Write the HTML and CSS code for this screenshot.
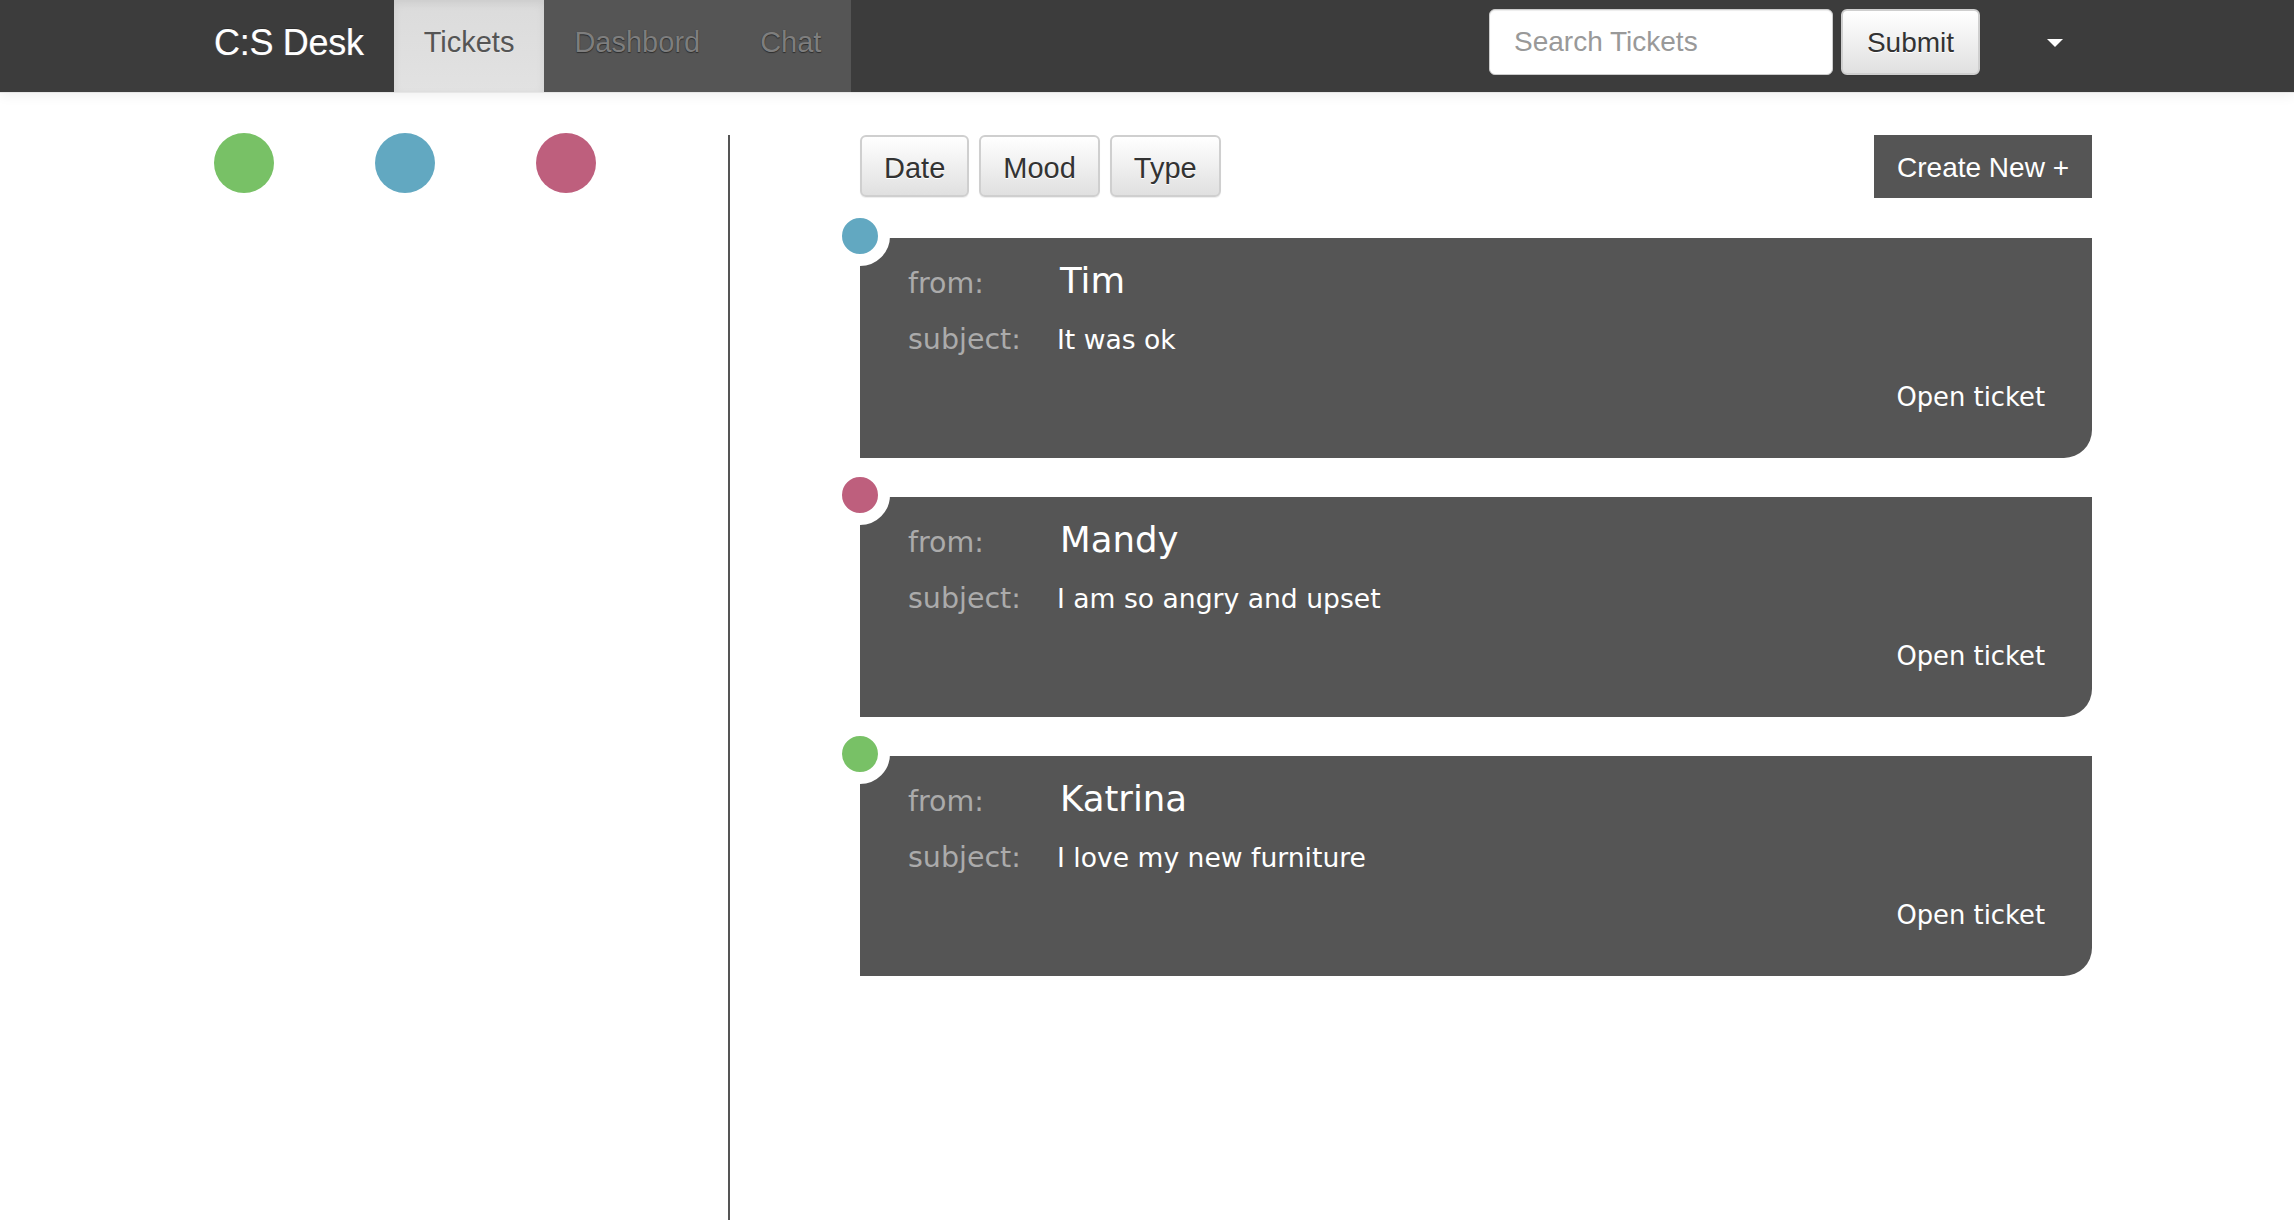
FILE: index.html
```html
<!DOCTYPE html>
<html lang="en">
<head>
<meta charset="utf-8">
<title>C:S Desk</title>
<link rel="stylesheet" href="styles.css">
</head>
<body>
<header class="navbar">
  <nav class="nav-inner">
    <a class="brand" href="#">C:S Desk</a>
    <ul class="tabs">
      <li class="tab active"><a href="#">Tickets</a></li>
      <li class="tab"><a href="#">Dashbord</a></li>
      <li class="tab"><a href="#">Chat</a></li>
    </ul>
    <div class="spacer"></div>
    <form class="search">
      <input class="search-input" type="text" placeholder="Search Tickets">
      <button class="btn" type="button">Submit</button>
    </form>
    <a class="dropdown" href="#"><span class="caret"></span></a>
  </nav>
</header>

<main class="page">
  <aside class="moods">
    <span class="mood-dot green"></span>
    <span class="mood-dot blue"></span>
    <span class="mood-dot pink"></span>
  </aside>

  <section class="tickets">
    <div class="toolbar">
      <div class="filters">
        <button class="btn filter" type="button">Date</button>
        <button class="btn filter" type="button">Mood</button>
        <button class="btn filter" type="button">Type</button>
      </div>
      <button class="create" type="button">Create New +</button>
    </div>

    <article class="ticket">
      <span class="badge blue"></span>
      <div class="fields">
        <span class="label">from:</span><span class="name">Tim</span>
        <span class="label">subject:</span><span class="subject">It was ok</span>
      </div>
      <a class="open" href="#">Open ticket</a>
    </article>

    <article class="ticket">
      <span class="badge pink"></span>
      <div class="fields">
        <span class="label">from:</span><span class="name">Mandy</span>
        <span class="label">subject:</span><span class="subject">I am so angry and upset</span>
      </div>
      <a class="open" href="#">Open ticket</a>
    </article>

    <article class="ticket">
      <span class="badge green"></span>
      <div class="fields">
        <span class="label">from:</span><span class="name">Katrina</span>
        <span class="label">subject:</span><span class="subject">I love my new furniture</span>
      </div>
      <a class="open" href="#">Open ticket</a>
    </article>
  </section>
</main>
</body>
</html>
```

FILE: styles.css
```css
* { box-sizing: border-box; }

html, body {
  margin: 0;
  padding: 0;
  background: #fff;
  overflow: hidden;
}

body {
  font-family: "Liberation Sans", Arial, sans-serif;
  color: #333;
}

a { text-decoration: none; }

/* ---------- navbar ---------- */
.navbar {
  height: 92px;
  background: #3c3c3c;
  box-shadow: 0 1px 0 #e6e6e6, 0 3px 12px rgba(0, 0, 0, 0.07);
  position: relative;
  z-index: 2;
}

.nav-inner {
  margin-left: 214px;
  width: 1878px;
  height: 92px;
  display: flex;
  align-items: stretch;
}

.brand {
  display: flex;
  align-items: center;
  padding-bottom: 7px;
  margin-right: 30px;
  font-size: 36px;
  color: #fff;
  letter-spacing: -0.3px;
  text-shadow: 0 -1px 0 rgba(0, 0, 0, 0.35), 0 0 1px rgba(255, 255, 255, 0.5);
}

.tabs {
  list-style: none;
  margin: 0;
  padding: 0;
  display: flex;
}

.tab a {
  height: 92px;
  display: flex;
  align-items: center;
  padding: 0 30px 7px;
  font-size: 29px;
  background: #555;
  color: #7e7e7e;
  text-shadow: 0 1px 1px rgba(0, 0, 0, 0.45), 0 0 1px rgba(0, 0, 0, 0.3);
}

.tab.active a {
  background: linear-gradient(to bottom, #dbdbdb 0%, #e2e2e2 100%);
  box-shadow: inset 0 3px 9px rgba(0, 0, 0, 0.075);
  color: #555;
  text-shadow: 0 1px 0 rgba(255, 255, 255, 0.25);
}

.spacer { flex: 1; }

.search {
  display: flex;
  align-items: flex-start;
  padding-top: 9px;
  margin-right: 38px;
}

.search-input {
  width: 344px;
  height: 66px;
  border: 1px solid #ccc;
  border-radius: 6px;
  padding: 0 24px;
  font-family: "Liberation Sans", Arial, sans-serif;
  font-size: 28px;
  color: #555;
  background: #fff;
  box-shadow: inset 0 1px 1px rgba(0, 0, 0, 0.075);
  outline: none;
}

.search-input::placeholder { color: #999; }

.btn {
  font-family: "Liberation Sans", Arial, sans-serif;
  font-size: 28px;
  color: #333;
  background: linear-gradient(to bottom, #ffffff 0%, #e0e0e0 100%);
  border: 2px solid #cfcfcf;
  border-radius: 6px;
  box-shadow: inset 0 1px 0 rgba(255, 255, 255, 0.15), 0 1px 1px rgba(0, 0, 0, 0.075);
  text-shadow: 0 1px 0 #fff;
  cursor: pointer;
}

.search .btn {
  margin-left: 8px;
  width: 139px;
  height: 66px;
  padding: 2px 0 0;
}

.dropdown {
  display: flex;
  align-items: center;
  padding: 0 29px 6px;
}

.caret {
  width: 0;
  height: 0;
  border-top: 8px solid #fff;
  border-left: 8px solid transparent;
  border-right: 8px solid transparent;
}

/* ---------- page ---------- */
.page {
  display: flex;
  margin-left: 214px;
  width: 1878px;
  padding-top: 43px;
}

.moods {
  width: 516px;
  min-height: calc(100vh - 135px);
  border-right: 2px solid #555;
  display: flex;
  align-items: flex-start;
  gap: 101px;
}

.mood-dot {
  width: 60px;
  height: 60px;
  margin-top: -2px;
  border-radius: 50%;
}

.green { background: #78c166; }
.blue { background: #62a8c1; }
.pink { background: #be5f7d; }

.tickets {
  margin-left: 130px;
  width: 1232px;
}

.toolbar {
  display: flex;
  justify-content: space-between;
  align-items: flex-start;
  height: 62px;
}

.filters {
  display: flex;
  gap: 10px;
}

.btn.filter {
  height: 62px;
  padding: 4px 22px 0;
  font-size: 29px;
}

.create {
  height: 63px;
  width: 218px;
  padding: 3px 0 0;
  border: 0;
  background: #555;
  color: #fff;
  font-family: "Liberation Sans", Arial, sans-serif;
  font-size: 28px;
  cursor: pointer;
}

/* ---------- ticket cards ---------- */
.ticket {
  position: relative;
  display: flex;
  flex-direction: column;
  height: 220px;
  margin-top: 39px;
  padding: 21px 47px 0 48px;
  background: #555;
  border-bottom-right-radius: 28px;
  font-family: "DejaVu Sans", Verdana, sans-serif;
}

.ticket:first-of-type { margin-top: 41px; }

.badge {
  position: absolute;
  left: -30px;
  top: -32px;
  width: 60px;
  height: 60px;
  border: 12px solid #fff;
  border-radius: 50%;
}

.fields {
  display: grid;
  grid-template-columns: 149px 1fr;
  grid-template-rows: 44px 40px;
  row-gap: 17px;
  align-items: baseline;
}

.label {
  font-size: 28.5px;
  color: #ababab;
}

.name {
  font-size: 35.5px;
  line-height: 44px;
  color: #fff;
  padding-left: 3px;
}

.subject {
  font-size: 26.6px;
  line-height: 40px;
  color: #fff;
}

.open {
  align-self: flex-end;
  margin-top: 19px;
  font-size: 25.8px;
  line-height: 36px;
  color: #fff;
}
```
